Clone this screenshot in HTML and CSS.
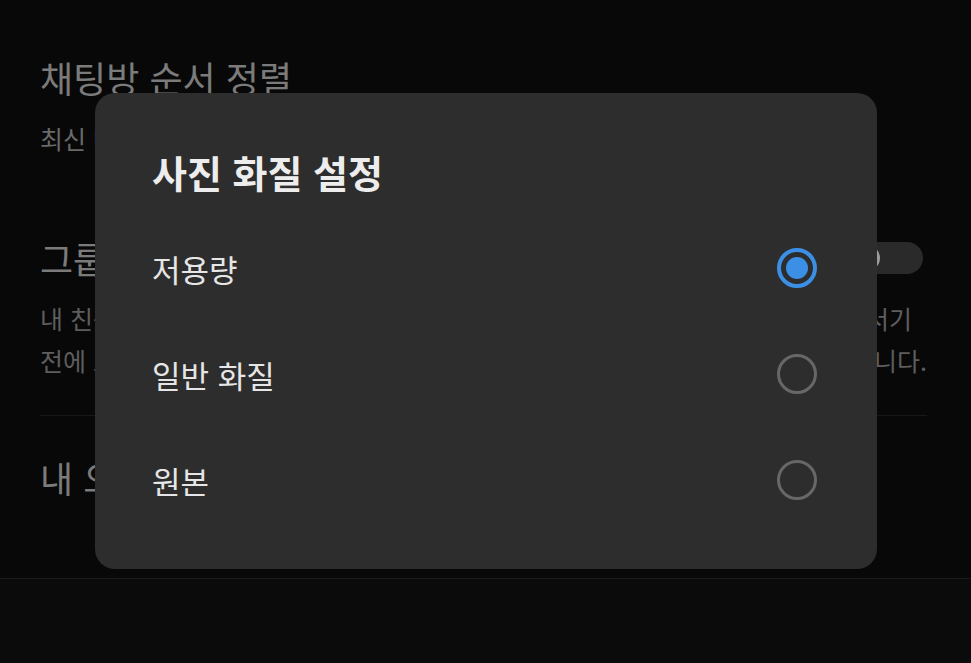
FILE: index.html
```html
<!DOCTYPE html>
<html lang="ko">
<head>
<meta charset="utf-8">
<title>사진 화질 설정</title>
<link rel="stylesheet" href="styles.css">
</head>
<body>
<div class="screen">
  <div class="settings">
    <section class="item first">
      <div class="item-title">채팅방 순서 정렬</div>
      <div class="item-sub">최신 메시지 순</div>
    </section>
    <section class="item second">
      <div class="row">
        <div class="item-title">그룹채팅방 초대 확인</div>
        <div class="toggle"><span class="knob"></span></div>
      </div>
      <div class="desc">
        <div class="desc-line l1"><span>내 친구가 아닌 사람이 그룹채팅방에 초대하면</span><span>채팅방에 들어서기</span></div>
        <div class="desc-line"><span>전에 초대 수락 여부를 먼저 선택할 수</span><span>있습니다.</span></div>
      </div>
    </section>
    <div class="divider"></div>
    <section class="item third">
      <div class="item-title">내 오픈채팅 설정</div>
    </section>
  </div>
  <div class="bottom"></div>

  <div class="dialog">
    <div class="dialog-title">사진 화질 설정</div>
    <div class="option">
      <span class="option-label">저용량</span>
      <span class="radio checked"><span class="dot"></span></span>
    </div>
    <div class="option">
      <span class="option-label">일반 화질</span>
      <span class="radio"></span>
    </div>
    <div class="option">
      <span class="option-label">원본</span>
      <span class="radio"></span>
    </div>
  </div>
</div>
</body>
</html>
```

FILE: styles.css
```css
* { box-sizing: border-box; }
html, body {
  margin: 0;
  padding: 0;
  background: #0b0b0b;
}
body {
  font-family: "Noto Sans CJK KR", "Noto Sans", sans-serif;
  width: 971px;
  height: 663px;
  overflow: hidden;
}
.screen {
  position: relative;
  width: 971px;
  height: 663px;
}
.settings {
  height: 579px;
  background: #080808;
  border-bottom: 1px solid #1a1a1a;
  padding: 0 44px 0 40px;
  overflow: hidden;
}
.bottom {
  height: 84px;
  background: #0b0b0b;
}
.item-title {
  font-size: 36px;
  line-height: 48px;
  color: #7b7b7b;
  white-space: nowrap;
}
.item.first { padding-top: 53px; }
.item-sub {
  margin-top: 19px;
  font-size: 25px;
  line-height: 36px;
  color: #6a6a6a;
}
.item.second { padding-top: 78px; }
.row {
  display: flex;
  align-items: center;
  justify-content: space-between;
}
.toggle {
  width: 72px;
  height: 32px;
  border-radius: 16px;
  background: #2a2a2a;
  margin-right: 4px;
  padding: 3px;
  display: flex;
  align-items: center;
}
.knob {
  width: 26px;
  height: 26px;
  border-radius: 50%;
  background: #9c9c9c;
}
.desc { margin-top: 15px; }
.desc-line {
  display: flex;
  justify-content: space-between;
  font-size: 25px;
  line-height: 42px;
  color: #5e5e5e;
  white-space: nowrap;
}
.desc-line.l1 { padding-right: 15px; }
.divider {
  margin-top: 34px;
  height: 1px;
  background: #171717;
}
.item.third { padding-top: 37px; }

.dialog {
  position: absolute;
  left: 95px;
  top: 93px;
  width: 782px;
  height: 476px;
  background: #2d2d2d;
  border-radius: 20px;
  padding: 51px 60px 36px 57px;
  color: #e8e8e8;
}
.dialog-title {
  font-size: 38px;
  line-height: 56px;
  font-weight: 700;
  color: #ededed;
  margin-bottom: 15px;
}
.option {
  height: 106px;
  display: flex;
  align-items: center;
  justify-content: space-between;
}
.option-label {
  font-size: 31px;
  color: #e6e6e6;
}
.radio {
  width: 40px;
  height: 40px;
  border-radius: 50%;
  border: 3px solid #676767;
  display: flex;
  align-items: center;
  justify-content: center;
}
.radio.checked {
  border: 4px solid #3b8fe5;
}
.dot {
  width: 22px;
  height: 22px;
  border-radius: 50%;
  background: #3b8fe5;
}
```
